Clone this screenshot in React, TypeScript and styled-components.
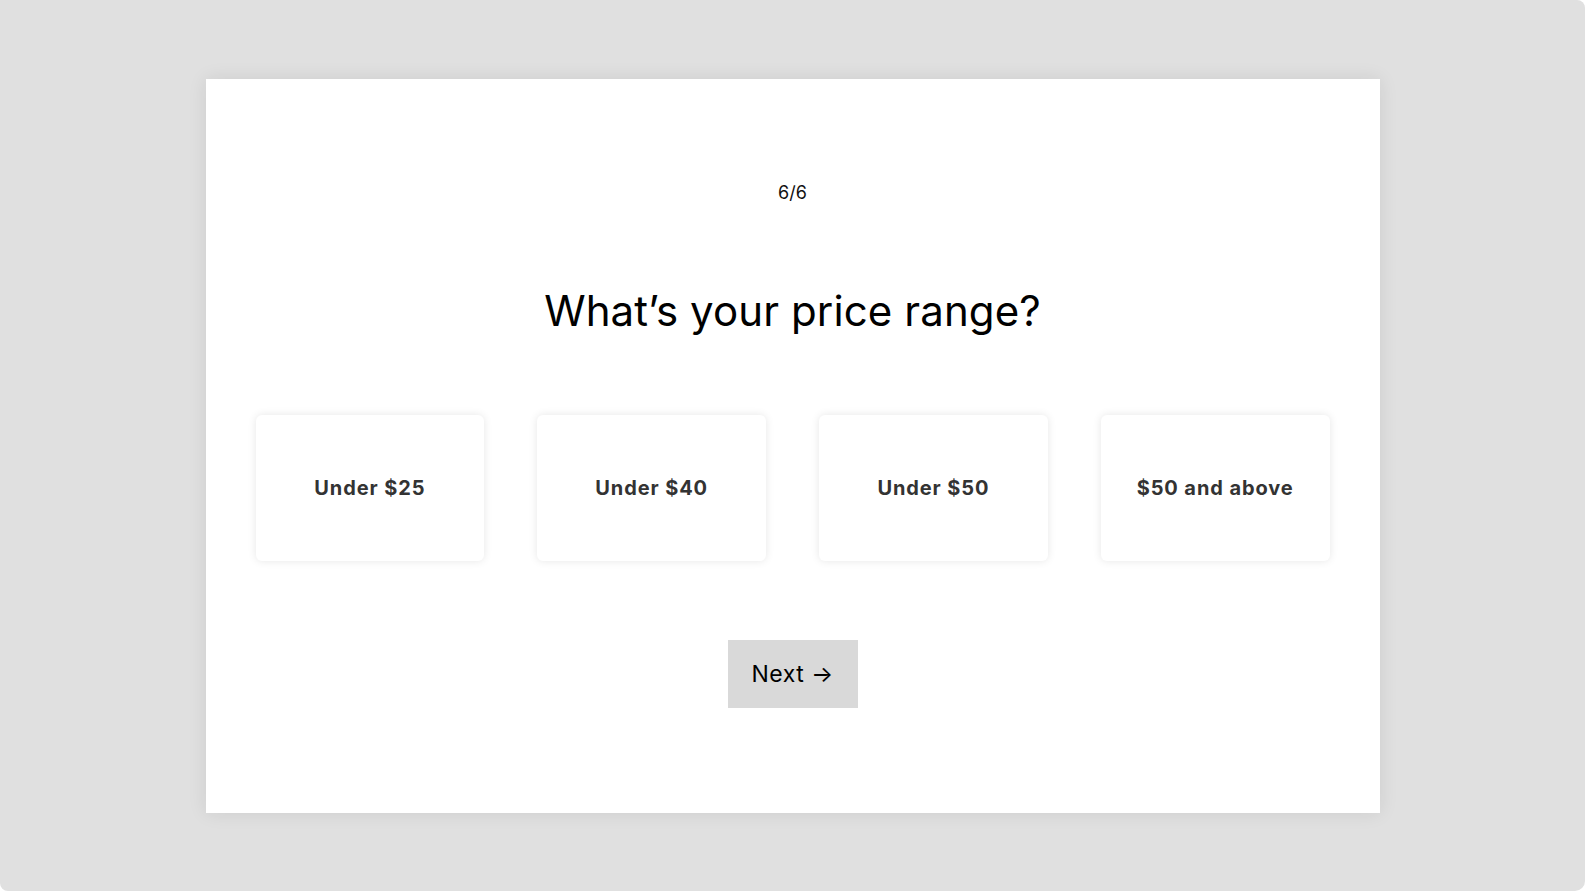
import styled, { createGlobalStyle } from "styled-components";

const GlobalStyle = createGlobalStyle`
  body {
    margin: 0;
    background: #ffffff;
    font-family: Inter, "Noto Sans", sans-serif;
  }
`;

const options = ["Under $25", "Under $40", "Under $50", "$50 and above"];

function App() {
  return (
    <>
      <GlobalStyle />
      <Frame>
        <Card>
          <Counter>6/6</Counter>
          <Question>What’s your price range?</Question>
          <Options>
            {options.map((label) => (
              <Option key={label} type="button">
                {label}
              </Option>
            ))}
          </Options>
          <NextButton type="button">Next →</NextButton>
        </Card>
      </Frame>
    </>
  );
}

const Frame = styled.div`
  width: 1585px;
  height: 891px;
  background: #e0e0e0;
  border-radius: 0 8px 10px 8px;
  display: flex;
  align-items: center;
  justify-content: center;
`;

const Card = styled.div`
  box-sizing: border-box;
  width: 1174px;
  height: 734px;
  padding: 104px 50px 0;
  background: #ffffff;
  box-shadow: 0 0 18px rgba(0, 0, 0, 0.09);
  display: flex;
  flex-direction: column;
  align-items: center;
`;

const Counter = styled.div`
  font-size: 18px;
  line-height: 20px;
  color: #111111;
`;

const Question = styled.h1`
  margin: 82px 0 0;
  font-size: 42px;
  line-height: 51px;
  font-weight: 400;
  letter-spacing: 0.1px;
  color: #000000;
`;

const Options = styled.div`
  margin-top: 79px;
  width: 100%;
  display: grid;
  grid-template-columns: repeat(4, 1fr);
  gap: 53px;
`;

const Option = styled.button`
  height: 146px;
  border: none;
  border-radius: 6px;
  background: #ffffff;
  box-shadow: 0 0 8px rgba(0, 0, 0, 0.1);
  font-family: Inter, "Noto Sans", sans-serif;
  font-size: 20px;
  font-weight: 700;
  letter-spacing: 0.9px;
  color: #333333;
  cursor: pointer;
`;

const NextButton = styled.button`
  margin-top: 79px;
  width: 130px;
  height: 68px;
  border: none;
  background: #d9d9d9;
  font-family: Inter, "Noto Sans", sans-serif;
  font-size: 23px;
  letter-spacing: 0.5px;
  color: #000000;
  cursor: pointer;
`;

export default App;
